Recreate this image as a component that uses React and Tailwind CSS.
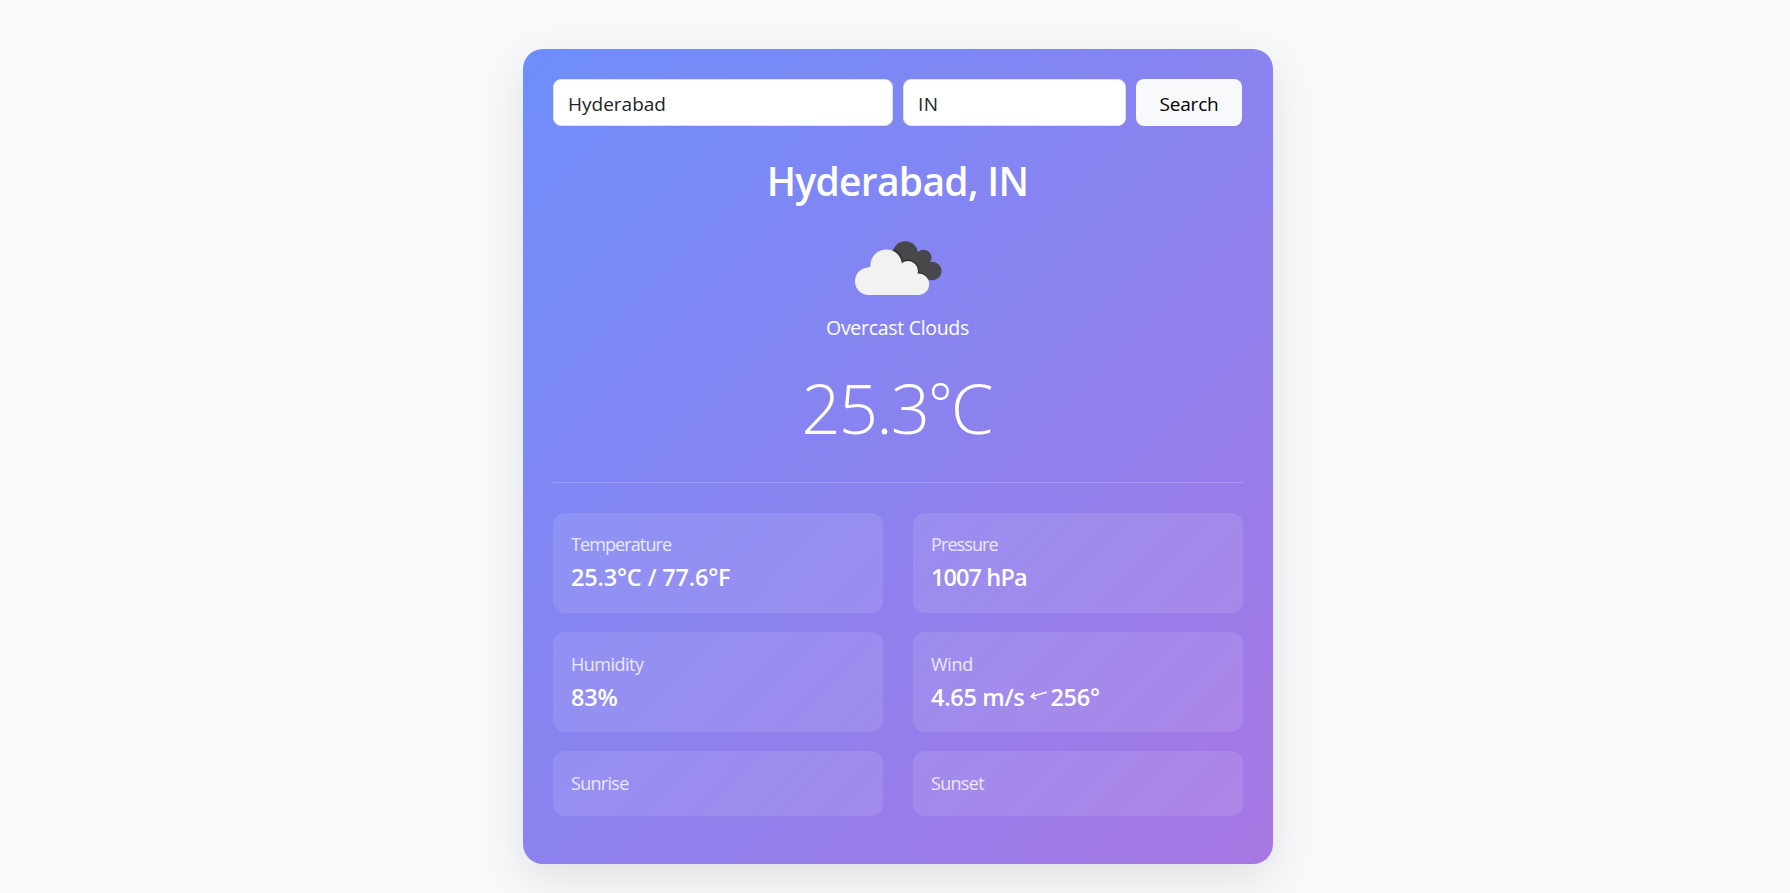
function CloudIcon() {
  return (
    <svg width="100" height="94" viewBox="0 0 100 94" className="block" aria-hidden="true">
      <g fill="#48484a">
        <circle cx="57.3" cy="36" r="12.8" />
        <circle cx="75.5" cy="39.7" r="8" />
        <circle cx="84.2" cy="53" r="9.3" />
        <path d="M57 30L75 36L84 50L80 62L60 56Z" />
      </g>
      <g fill="none" stroke="#2c2c30" strokeWidth="1.2">
        <path d="M46 31.5A17 17 0 0 1 54.5 43.5A10.8 10.8 0 0 1 70.3 54.8A11.6 11.6 0 0 1 79.8 61.5" />
      </g>
      <g fill="#f2f2f0">
        <circle cx="38.2" cy="47.2" r="15.7" />
        <circle cx="20.7" cy="63.2" r="13.7" />
        <circle cx="60" cy="53" r="10" />
        <circle cx="70.3" cy="66.2" r="10.8" />
        <path d="M20 49.5L38 42L60 50L70 58V77H20Z" />
      </g>
    </svg>
  );
}

function WindArrow() {
  return (
    <svg width="18" height="10" viewBox="0 0 18 10" className="mr-[2px] ml-[6px] -mt-[3px] block" fill="none" stroke="currentColor" strokeWidth="1.6" aria-hidden="true">
      <path d="M17 1.2L1.5 5.4M4.6 1.4L1.3 5.5L6 8.2" />
    </svg>
  );
}

function Tile({ label, spacing, size = "h-[100px] pt-[18px]", children }) {
  return (
    <div className={`${size} rounded-xl bg-white/10 px-[18px] whitespace-nowrap`}>
      <div className={`mb-px text-[18px] leading-[27px] text-white/80 ${spacing}`}>{label}</div>
      {children}
    </div>
  );
}

function Value({ spacing, children }) {
  return <div className={`flex items-center text-[23.5px] leading-[36px] font-semibold ${spacing}`}>{children}</div>;
}

export default function App() {
  return (
    <main className="flex h-[893px] justify-center overflow-hidden bg-[#f8f9fa] pt-[49px] pl-[6px] font-['Open_Sans','Noto_Sans',sans-serif]">
      <section className="h-[815px] w-[750px] shrink-0 rounded-[20px] bg-[linear-gradient(135deg,#6e8efb,#a777e3)] p-[30px] text-white shadow-[0_15px_45px_rgba(0,0,0,0.1)]">
        <form className="flex h-[47px] gap-[10px] text-[19px]" onSubmit={(e) => e.preventDefault()}>
          <input className="w-[340px] rounded-lg border border-[#dee2e6] bg-white px-[14px] pt-[3px] text-[#212529] outline-none" defaultValue="Hyderabad" aria-label="City" />
          <input className="w-[223px] rounded-lg border border-[#dee2e6] bg-white px-[14px] pt-[3px] tracking-[0.4px] text-[#212529] outline-none" defaultValue="IN" aria-label="Country" />
          <button className="w-[106px] rounded-lg bg-[#f8f9fa] pt-[3px] tracking-[-0.2px] text-black">Search</button>
        </form>
        <div className="flex flex-col items-center whitespace-nowrap">
          <h1 className="mt-[31px] pr-px text-[39px] leading-[48px] font-semibold tracking-[-0.7px]">Hyderabad, IN</h1>
          <div className="mt-[13px]"><CloudIcon /></div>
          <p className="mt-px pr-px text-[19.5px] leading-[30px] tracking-[-0.3px]">Overcast Clouds</p>
          <div className="mt-[21px] h-[86px] pr-[3px] text-[69px] leading-[86px] font-light tracking-[-1.9px]">
            25.3<span className="align-[9px] text-[57px] leading-none">°</span>C
          </div>
        </div>
        <hr className="mt-[32px] mb-[30px] border-t border-white/20" />
        <div className="grid grid-cols-2 gap-x-[30px] gap-y-[19px]">
          <Tile label="Temperature" spacing="tracking-[-0.9px]"><Value spacing="tracking-[-0.2px]">25.3°C / 77.6°F</Value></Tile>
          <Tile label="Pressure" spacing="tracking-[-0.9px]"><Value spacing="tracking-[-0.9px]">1007 hPa</Value></Tile>
          <Tile label="Humidity" spacing="tracking-[-0.5px]" size="h-[100px] pt-[19px]"><Value spacing="tracking-[-0.2px]">83%</Value></Tile>
          <Tile label="Wind" spacing="tracking-[-0.3px]" size="h-[100px] pt-[19px]"><Value spacing="tracking-[-0.3px]">4.65 m/s<WindArrow />256°</Value></Tile>
          <Tile label="Sunrise" spacing="tracking-[-0.7px]" size="h-[65px] pt-[19px]" />
          <Tile label="Sunset" spacing="tracking-[-0.7px]" size="h-[65px] pt-[19px]" />
        </div>
      </section>
    </main>
  );
}
